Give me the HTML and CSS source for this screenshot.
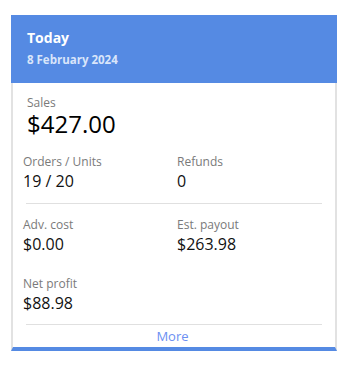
FILE: index.html
```html
<!DOCTYPE html>
<html>
<head>
<meta charset="utf-8">
<link rel="stylesheet" href="styles.css">
</head>
<body>
<div class="card">
  <div class="card-header">
    <div class="title">Today</div>
    <div class="date">8 February 2024</div>
  </div>
  <div class="card-body">
    <div class="sales">
      <div class="label">Sales</div>
      <div class="big">$427.00</div>
    </div>
    <div class="grid grid-top">
      <div class="item">
        <div class="label">Orders / Units</div>
        <div class="value">19 / 20</div>
      </div>
      <div class="item">
        <div class="label">Refunds</div>
        <div class="value">0</div>
      </div>
    </div>
    <div class="sep"></div>
    <div class="grid grid-bottom">
      <div class="item">
        <div class="label">Adv. cost</div>
        <div class="value">$0.00</div>
      </div>
      <div class="item">
        <div class="label">Est. payout</div>
        <div class="value">$263.98</div>
      </div>
      <div class="item">
        <div class="label">Net profit</div>
        <div class="value">$88.98</div>
      </div>
    </div>
    <div class="sep"></div>
    <div class="more">More</div>
  </div>
</div>
</body>
</html>
```
FILE: styles.css
```css
html, body {
  margin: 0;
  padding: 0;
  background: #fff;
}
body {
  padding: 15px 0 0 11px;
  font-family: "Open Sans", "Noto Sans", sans-serif;
}
.card {
  width: 326px;
}
.card-header {
  background: #558ae3;
  height: 68px;
  box-sizing: border-box;
  padding: 12px 16px 0 16px;
  color: #fff;
}
.title {
  font-size: 14px;
  font-weight: 700;
  line-height: 22px;
}
.date {
  font-size: 11.5px;
  font-weight: 700;
  line-height: 22px;
  color: #d9e5fa;
}
.card-body {
  border-left: 2px solid #e2e2e2;
  border-right: 2px solid #e2e2e2;
  border-bottom: 4px solid #558ae3;
  height: 264px;
  box-sizing: content-box;
  padding: 0 13px 0 10px;
}
.sales {
  padding: 11px 0 0 4px;
}
.label {
  font-size: 12px;
  color: #7a7a7a;
  line-height: 17px;
}
.big {
  font-size: 24px;
  color: #000;
  line-height: 26px;
}
.grid {
  display: grid;
  grid-template-columns: 154px 1fr;
  row-gap: 20px;
}
.grid-top {
  padding: 16px 0 11px 0;
}
.grid-bottom {
  padding: 12px 0 10px 0;
}
.value {
  font-size: 16px;
  color: #111;
  line-height: 22px;
}
.sep {
  height: 1px;
  background: #e0e0e0;
  margin: 0 0 0 3px;
}
.more {
  text-align: center;
  font-size: 13px;
  color: #6b8ff2;
  line-height: 22px;
}
```
